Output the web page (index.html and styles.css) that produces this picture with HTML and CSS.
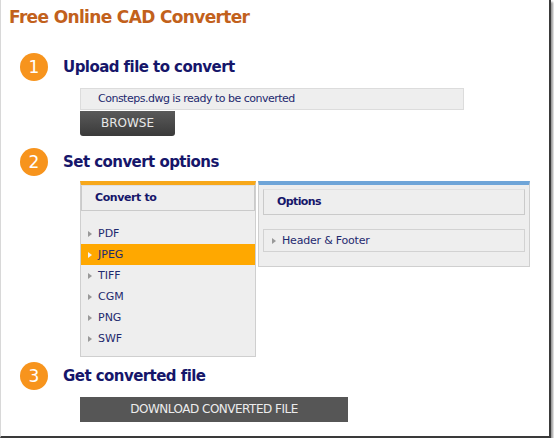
FILE: index.html
```html
<!DOCTYPE html>
<html>
<head>
<meta charset="utf-8">
<link rel="stylesheet" href="styles.css">
</head>
<body>
<div class="frame">
  <h1 class="title">Free Online CAD Converter</h1>

  <div class="step step1">
    <span class="num">1</span>
    <h2 class="step-title">Upload file to convert</h2>
  </div>
  <div class="upload">
    <div class="filefield">Consteps.dwg is ready to be converted</div>
    <div class="browse">BROWSE</div>
  </div>

  <div class="step step2">
    <span class="num">2</span>
    <h2 class="step-title">Set convert options</h2>
  </div>
  <div class="panels">
    <div class="panel left">
      <div class="panel-head">Convert to</div>
      <ul class="formats">
        <li><span class="tri"></span>PDF</li>
        <li class="active"><span class="tri"></span>JPEG</li>
        <li><span class="tri"></span>TIFF</li>
        <li><span class="tri"></span>CGM</li>
        <li><span class="tri"></span>PNG</li>
        <li><span class="tri"></span>SWF</li>
      </ul>
    </div>
    <div class="panel right">
      <div class="panel-head opt">Options</div>
      <div class="opt-item"><span class="tri"></span>Header &amp; Footer</div>
    </div>
  </div>

  <div class="step step3">
    <span class="num">3</span>
    <h2 class="step-title">Get converted file</h2>
  </div>
  <div class="download">DOWNLOAD CONVERTED FILE</div>
</div>
</body>
</html>
```

FILE: styles.css
```css
* { box-sizing: border-box; }
html, body { margin: 0; padding: 0; background: #fff; }
body { font-family: "DejaVu Sans", Verdana, sans-serif; }

.frame {
  width: 551px;
  height: 438px;
  border-left: 1px solid #d8d8d8;
  border-right: 2px solid #3a3a3a;
  border-bottom: 2px solid #3a3a3a;
  box-shadow: 2px 2px 2px #999;
  padding: 0 0 0 8px;
  background: #fff;
}

.title {
  margin: 0;
  padding-top: 6px;
  font-size: 17px;
  line-height: 22px;
  font-weight: bold;
  color: #c2611c;
  letter-spacing: -0.65px;
}

.step {
  display: flex;
  align-items: center;
  height: 28px;
}
.num {
  width: 28px;
  height: 28px;
  border-radius: 50%;
  background: #f7941d;
  color: #fff;
  font-size: 17px;
  line-height: 28px;
  text-align: center;
  margin-left: 11px;
  flex: none;
}
.step-title {
  margin: 0 0 0 15px;
  font-size: 15px;
  font-weight: bold;
  color: #16166a;
  letter-spacing: -0.55px;
}
.step1 { margin-top: 25px; }
.step2 { margin-top: 12px; }
.step3 { margin-top: 5px; }

.upload { margin: 7px 0 0 71px; }
.filefield {
  width: 384px;
  height: 22px;
  background: #eeeeee;
  border: 1px solid #dcdcdc;
  color: #1e2a6e;
  font-size: 11px;
  letter-spacing: -0.5px;
  line-height: 20px;
  padding-left: 17px;
}
.browse {
  width: 95px;
  height: 25px;
  margin-top: 1px;
  background: linear-gradient(#5a5a5a, #3a3a3a);
  border-radius: 0 0 3px 3px;
  color: #e8e8e8;
  font-size: 12px;
  line-height: 25px;
  text-align: center;
}

.panels {
  display: flex;
  align-items: flex-start;
  gap: 2px;
  margin: 5px 0 0 71px;
}
.panel {
  background: #eeeeee;
  border: 1px solid #cfcfcf;
  border-top: 4px solid #f7a81b;
}
.panel.left { width: 176px; height: 176px; }
.panel.right {
  width: 272px;
  height: 86px;
  border-top-color: #6fa5d8;
  padding: 4px 4px 0 4px;
}
.panel-head {
  height: 26px;
  border: 1px solid #cacaca;
  border-top-color: #e0e0e0;
  background: #eeeeee;
  color: #16166a;
  font-weight: bold;
  font-size: 11px;
  letter-spacing: -0.4px;
  line-height: 24px;
  padding-left: 13px;
}
.panel-head.opt { padding-left: 13px; letter-spacing: -0.6px; }

.formats {
  list-style: none;
  margin: 12px 0 0 0;
  padding: 0;
}
.formats li {
  height: 21px;
  line-height: 21px;
  font-size: 11px;
  color: #1e2a6e;
  padding-left: 7px;
  display: flex;
  align-items: center;
}
.formats li.active { background: #ffa800; }
.tri {
  width: 0;
  height: 0;
  border-left: 4px solid #999;
  border-top: 3px solid transparent;
  border-bottom: 3px solid transparent;
  margin-right: 6px;
  flex: none;
}
.formats li.active .tri { border-left-color: #f4f4f4; }

.opt-item {
  margin-top: 14px;
  height: 23px;
  border: 1px solid #d2d2d2;
  font-size: 11px;
  letter-spacing: -0.2px;
  color: #1e2a6e;
  display: flex;
  align-items: center;
  padding-left: 8px;
}

.download {
  margin: 7px 0 0 71px;
  width: 268px;
  height: 25px;
  background: #565656;
  color: #ececec;
  font-size: 12px;
  letter-spacing: -0.5px;
  line-height: 25px;
  text-align: center;
}
```
